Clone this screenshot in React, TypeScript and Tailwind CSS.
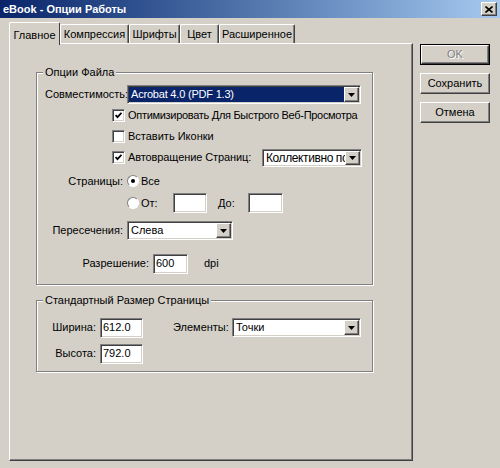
import React from 'react';

// classic Win2000 bevels
const raised =
  'border border-t-white border-l-white border-r-[#404040] border-b-[#404040] shadow-[inset_-1px_-1px_0_#808080]';
const sunken =
  'border border-t-[#808080] border-l-[#808080] border-r-white border-b-white shadow-[inset_1px_1px_0_#404040,inset_-1px_-1px_0_#d4d0c8]';

const Arrow: React.FC = () => (
  <svg width="7" height="4" viewBox="0 0 7 4">
    <path d="M0 0h7L3.5 4z" fill="#000" />
  </svg>
);

const Select: React.FC<{ value: string; width: string; height?: string; selected?: boolean; textClass?: string }> = ({
  value,
  width,
  height = 'h-[19px]',
  selected,
  textClass = '',
}) => (
  <div className={`${width} ${height} ${sunken} bg-white flex items-stretch p-[1px]`}>
    <div
      className={`flex-1 flex items-center pl-[2px] overflow-hidden whitespace-nowrap ${textClass} ${
        selected ? 'bg-[#0a246a] text-white' : 'text-black'
      }`}
    >
      {value}
    </div>
    <div className={`w-[15px] bg-[#d4d0c8] ${raised} flex items-center justify-center`}>
      <Arrow />
    </div>
  </div>
);

const Input: React.FC<{ value?: string; width: string }> = ({ value = '', width }) => (
  <div className={`${width} h-[20px] ${sunken} bg-white flex items-center pl-[2px] text-black`}>{value}</div>
);

const Checkbox: React.FC<{ checked?: boolean }> = ({ checked }) => (
  <div className={`w-[13px] h-[13px] ${sunken} bg-white flex items-center justify-center shrink-0`}>
    {checked && (
      <svg width="7" height="7" viewBox="0 0 7 7">
        <path d="M0.5 3l2 2.2L6.5 0.8" stroke="#000" strokeWidth="1.8" fill="none" />
      </svg>
    )}
  </div>
);

const Radio: React.FC<{ checked?: boolean }> = ({ checked }) => (
  <div className="w-[12px] h-[12px] rounded-full border border-t-[#808080] border-l-[#808080] border-r-white border-b-white bg-white flex items-center justify-center shrink-0">
    {checked && <div className="w-[4px] h-[4px] rounded-full bg-black" />}
  </div>
);

const Group: React.FC<{ title: string; className: string; children: React.ReactNode }> = ({
  title,
  className,
  children,
}) => (
  <div
    className={`relative w-[337px] border border-[#808080] shadow-[inset_1px_1px_0_#fff,1px_1px_0_#fff] pl-[8px] ${className}`}
  >
    <span className="absolute -top-[7px] left-[6px] px-[2px] bg-[#d4d0c8] leading-[13px]">{title}</span>
    {children}
  </div>
);

const Button: React.FC<{ label: string; isDefault?: boolean; disabled?: boolean }> = ({
  label,
  isDefault,
  disabled,
}) => (
  <div className={`w-[70px] h-[21px] ${isDefault ? 'border border-black' : ''}`}>
    <div
      className={`w-full h-full ${raised} flex items-center justify-center ${
        disabled ? 'text-[#808080] [text-shadow:1px_1px_0_#fff]' : 'text-black'
      }`}
    >
      {label}
    </div>
  </div>
);

const tabs = [
  { label: 'Главное', w: 'w-[51px]' },
  { label: 'Компрессия', w: 'w-[69px]' },
  { label: 'Шрифты', w: 'w-[51px]' },
  { label: 'Цвет', w: 'w-[39px]' },
  { label: 'Расширенное', w: 'w-[76px]' },
];

export default function App() {
  return (
    <div className="w-[500px] h-[468px] bg-[#d4d0c8] font-['Liberation_Sans',Arial,sans-serif] text-[11px] text-black overflow-hidden">
      {/* title bar */}
      <div className="h-[18px] bg-gradient-to-r from-[#0a246a] to-[#a6caf0] flex items-center justify-between pl-[3px] pr-[3px]">
        <span className="text-white font-bold">eBook - Опции Работы</span>
        <div className={`w-[16px] h-[14px] bg-[#d4d0c8] ${raised} flex items-center justify-center`}>
          <svg width="8" height="7" viewBox="0 0 8 7">
            <path d="M0.5 0.5l7 6M7.5 0.5l-7 6" stroke="#000" strokeWidth="1.6" />
          </svg>
        </div>
      </div>

      <div className="flex pl-[9px] pt-[4px]">
        <div className="w-[404px] flex flex-col">
          {/* tabs */}
          <div className="h-[21px] flex items-end pl-[2px]">
            {tabs.map((t, i) =>
              i === 0 ? (
                <div
                  key={t.label}
                  className={`${t.w} relative z-10 h-[23px] -mb-[2px] -ml-[2px] bg-[#d4d0c8] border-l border-t border-r border-l-white border-t-white border-r-[#404040] rounded-t-[2px] flex items-start justify-center pt-[4px]`}
                >
                  {t.label}
                </div>
              ) : (
                <div
                  key={t.label}
                  className={`${t.w} h-[19px] border-l border-t border-r border-l-white border-t-white border-r-[#404040] shadow-[inset_-1px_0_0_#808080] rounded-t-[2px] flex items-center justify-center`}
                >
                  {t.label}
                </div>
              )
            )}
          </div>

          {/* tab page */}
          <div className={`h-[418px] ${raised} pl-[26px] pt-[28px]`}>
            <Group title="Опции Файла" className="h-[213px] pt-[12px]">
              <div className="flex items-center h-[19px]">
                <span className="w-[78px] text-right">Совместимость:</span>
                <div className="ml-[4px]">
                  <Select
                    value="Acrobat 4.0 (PDF 1.3)"
                    width="w-[234px]"
                    selected
                    textClass="tracking-[-0.2px]"
                  />
                </div>
              </div>

              <div className="flex items-center h-[21px] mt-[1px] pl-[67px] gap-[3px]">
                <Checkbox checked />
                <span className="tracking-[-0.3px]">Оптимизировать Для Быстрого Веб-Просмотра</span>
              </div>
              <div className="flex items-center h-[21px] pl-[67px] gap-[3px]">
                <Checkbox />
                <span>Вставить Иконки</span>
              </div>
              <div className="flex items-center h-[21px] pl-[67px]">
                <Checkbox checked />
                <span className="ml-[3px] w-[134px] tracking-[-0.1px]">Автовращение Страниц:</span>
                <Select
                  value="Коллективно по Файлу"
                  width="w-[100px]"
                  height="h-[18px]"
                  textClass="text-[12px] tracking-[-0.4px]"
                />
              </div>

              <div className="flex items-center h-[20px] mt-[3px]">
                <span className="w-[78px] text-right">Страницы:</span>
                <div className="ml-[4px]">
                  <Radio checked />
                </div>
                <span className="ml-[2px]">Все</span>
              </div>
              <div className="flex items-center h-[20px] mt-[2px] pl-[82px]">
                <Radio />
                <span className="ml-[2px] w-[32px]">От:</span>
                <Input width="w-[34px]" />
                <span className="ml-[11px] w-[30px]">До:</span>
                <Input width="w-[35px]" />
              </div>

              <div className="flex items-center h-[19px] mt-[8px]">
                <span className="w-[78px] text-right">Пересечения:</span>
                <div className="ml-[4px]">
                  <Select value="Слева" width="w-[106px]" />
                </div>
              </div>

              <div className="flex items-center h-[19px] mt-[14px]">
                <span className="w-[104px] text-right">Разрешение:</span>
                <div className="ml-[4px]">
                  <Input value="600" width="w-[35px]" />
                </div>
                <span className="ml-[16px]">dpi</span>
              </div>
            </Group>

            <Group title="Стандартный Размер Страницы" className="h-[72px] mt-[15px] pt-[17px]">
              <div className="flex items-center h-[19px]">
                <span className="w-[51px] text-right">Ширина:</span>
                <div className="ml-[4px]">
                  <Input value="612.0" width="w-[43px]" />
                </div>
                <span className="ml-[30px] w-[55px] text-right">Элементы:</span>
                <div className="ml-[4px]">
                  <Select value="Точки" width="w-[129px]" />
                </div>
              </div>
              <div className="flex items-center h-[19px] mt-[7px]">
                <span className="w-[51px] text-right">Высота:</span>
                <div className="ml-[4px]">
                  <Input value="792.0" width="w-[43px]" />
                </div>
              </div>
            </Group>
          </div>
        </div>

        {/* dialog buttons */}
        <div className="ml-[7px] mt-[22px] flex flex-col gap-[8px]">
          <Button label="OK" isDefault disabled />
          <Button label="Сохранить" />
          <Button label="Отмена" />
        </div>
      </div>
    </div>
  );
}
